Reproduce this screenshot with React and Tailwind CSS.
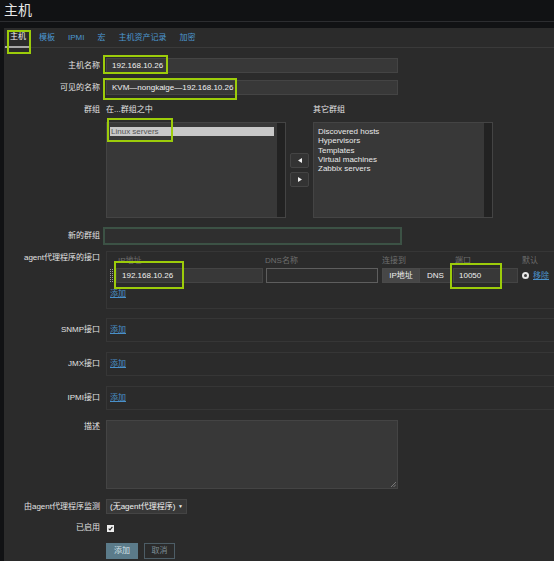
import React from "react";

// Zabbix "create host" form, dark theme, with green highlight annotations
const Label = ({ children, className = "" }) => (
  <div className={`w-[96px] shrink-0 text-right text-[#e2e2e2] ${className}`}>{children}</div>
);

const Field = ({ value = "", className = "" }) => (
  <div className={`h-[15px] border border-[#444] bg-[#383838] pl-[5px] leading-[13px] text-[#f0f0f0] ${className}`}>
    {value}
  </div>
);

const AddLink = () => <span className="text-[#4a90c8] underline">添加</span>;

function ListBox({ children }) {
  return (
    <div className="flex h-[96px] w-[180px] border border-[#444] bg-[#383838]">
      <div className="flex-1 px-[3px] pt-[4px] leading-[9.3px]">{children}</div>
      <div className="w-[8px] bg-[#222]" />
    </div>
  );
}

function Arrow({ dir }) {
  return (
    <div className="flex h-[15px] w-[19px] items-center justify-center rounded-[2px] border border-[#444] bg-[#333]">
      <svg width="4" height="5" viewBox="0 0 4 5">
        {dir === "left" ? <path d="M4 0 L0 2.5 L4 5 Z" fill="#eee" /> : <path d="M0 0 L4 2.5 L0 5 Z" fill="#eee" />}
      </svg>
    </div>
  );
}

const Mark = ({ className }) => <div className={`absolute border-2 border-[#9ccc0a] ${className}`} />;

export default function App() {
  return (
    <div className="relative flex h-[561px] w-[554px] flex-col overflow-hidden bg-[#111214] font-['Liberation_Sans','Noto_Sans_CJK_SC',sans-serif] text-[8px]">
      {/* page title */}
      <div className="h-[21px] px-[4px] text-[14px] leading-[20px] text-[#e8e8e8]">主机</div>
      <div className="h-[7px] border-t border-[#2c2d30]" />

      <div className="ml-[4px] flex-1 bg-[#2b2b2b]">
        {/* tabs */}
        <div className="flex h-[20px] gap-[3px] border-b border-[#3a3a3a] pl-[1px]">
          <div className="flex h-[20px] items-center border-b-2 border-[#a8a8a8] px-[5px] text-[#f0f0f0]">主机</div>
          {["模板", "IPMI", "宏", "主机资产记录", "加密"].map((t) => (
            <div key={t} className="flex h-[20px] items-center px-[5px] text-[#4b98d2]">
              {t}
            </div>
          ))}
        </div>

        <div className="flex flex-col pt-[10px]">
          <div className="flex h-[15px] items-center">
            <Label>主机名称</Label>
            <Field value="192.168.10.26" className="ml-[6px] w-[292px]" />
          </div>

          <div className="mt-[7px] flex h-[15px] items-center">
            <Label>可见的名称</Label>
            <Field value="KVM—nongkaige—192.168.10.26" className="ml-[6px] w-[292px]" />
          </div>

          {/* groups */}
          <div className="mt-[9px] flex">
            <Label className="leading-[12px]">群组</Label>
            <div className="ml-[6px] flex items-center">
              <div>
                <div className="leading-[12px] text-[#e2e2e2]">在...群组之中</div>
                <div className="mt-[6px]">
                  <ListBox>
                    <div className="bg-[#c8c8c8] pl-[1px] text-[#555]">Linux servers</div>
                  </ListBox>
                </div>
              </div>
              <div className="mx-[4px] mt-[18px] flex flex-col gap-[4px]">
                <Arrow dir="left" />
                <Arrow dir="right" />
              </div>
              <div>
                <div className="leading-[12px] text-[#e2e2e2]">其它群组</div>
                <div className="mt-[6px]">
                  <ListBox>
                    <div className="pl-[1px] text-[#e8e8e8]">
                      <div>Discovered hosts</div>
                      <div>Hypervisors</div>
                      <div>Templates</div>
                      <div>Virtual machines</div>
                      <div>Zabbix servers</div>
                    </div>
                  </ListBox>
                </div>
              </div>
            </div>
          </div>

          <div className="mt-[9px] flex h-[18px] items-center">
            <Label>新的群组</Label>
            <div className="ml-[3px] h-[18px] w-[299px] border-2 border-[#3c5245] bg-[#2f2f2f]" />
          </div>

          {/* agent interfaces */}
          <div className="mt-[6px] flex">
            <Label className="pt-[2px] leading-[10px]">agent代理程序的接口</Label>
            <div className="ml-[6px] h-[58px] w-[452px] shrink-0 border border-[#363636] pl-[3px] pt-[3px]">
              <div className="flex h-[11px] leading-[11px] text-[#6e6e6e]">
                <div className="w-[6px]" />
                <div className="w-[147px] pl-[2px]">IP地址</div>
                <div className="ml-[2px] w-[113px]">DNS名称</div>
                <div className="ml-[4px] w-[70px]">连接到</div>
                <div className="ml-[1px] w-[65px] pl-[2px]">端口</div>
                <div className="ml-[4px]">默认</div>
              </div>
              <div className="mt-[2px] flex h-[15px] items-center">
                <svg width="6" height="13" viewBox="0 0 6 13" className="shrink-0">
                  {[0, 2, 4, 6, 8, 10, 12].map((y) => (
                    <g key={y}>
                      <rect x="0" y={y} width="1" height="1" fill="#9a9a9a" />
                      <rect x="2" y={y} width="1" height="1" fill="#9a9a9a" />
                    </g>
                  ))}
                </svg>
                <Field value="192.168.10.26" className="w-[147px]" />
                <div className="ml-[3px] h-[15px] w-[112px] border border-[#5e5e5e] bg-[#2e2e2e]" />
                <div className="ml-[4px] flex h-[15px] w-[70px]">
                  <div className="flex w-[38px] items-center justify-center border border-[#4a4a4a] bg-[#474747] text-[#f0f0f0]">IP地址</div>
                  <div className="flex flex-1 items-center justify-center border border-l-0 border-[#444] bg-[#383838] text-[#f0f0f0]">DNS</div>
                </div>
                <Field value="10050" className="ml-[1px] w-[65px]" />
                <div className="ml-[4px] flex h-[7px] w-[7px] items-center justify-center rounded-full bg-[#e6e6e6]">
                  <div className="h-[3px] w-[3px] rounded-full bg-[#3a3a3a]" />
                </div>
                <span className="ml-[4px] text-[#4a90c8] underline">移除</span>
              </div>
              <div className="mt-[5px] leading-[12px]">
                <AddLink />
              </div>
            </div>
          </div>

          {["SNMP接口", "JMX接口", "IPMI接口"].map((name, i) => (
            <div key={name} className={`flex h-[24px] items-center ${i === 0 ? "mt-[9px]" : "mt-[10px]"}`}>
              <Label>{name}</Label>
              <div className="ml-[6px] flex h-[24px] w-[452px] shrink-0 items-center border border-[#363636] pl-[3px]">
                <AddLink />
              </div>
            </div>
          ))}

          {/* description */}
          <div className="mt-[10px] flex">
            <Label className="pt-[2px] leading-[10px]">描述</Label>
            <div className="relative ml-[6px] h-[69px] w-[292px] border border-[#444] bg-[#383838]">
              <svg width="5" height="5" viewBox="0 0 5 5" className="absolute bottom-[1px] right-[1px]">
                <path d="M5 0 L0 5 M5 2.5 L2.5 5" stroke="#8a8a8a" strokeWidth="0.8" />
              </svg>
            </div>
          </div>

          <div className="mt-[10px] flex h-[15px] items-center">
            <Label>由agent代理程序监测</Label>
            <div className="ml-[6px] flex h-[15px] w-[81px] items-center justify-between border border-[#444] bg-[#383838] pl-[3px] pr-[3px] text-[#f0f0f0]">
              <span>(无agent代理程序)</span>
              <span className="text-[5px]">▼</span>
            </div>
          </div>

          <div className="mt-[10px] flex h-[8px] items-center">
            <Label>已启用</Label>
            <div className="ml-[7px] flex h-[7px] w-[7px] items-center justify-center bg-[#eee]">
              <svg width="5" height="5" viewBox="0 0 5 5">
                <path d="M0.7 2.6 L2 3.9 L4.4 0.9" stroke="#222" strokeWidth="1.1" fill="none" />
              </svg>
            </div>
          </div>

          <div className="mt-[11px] flex">
            <div className="w-[96px]" />
            <div className="ml-[6px] flex h-[16px] w-[32px] items-center justify-center bg-[#5b7b8a] text-[#d5e0e6]">添加</div>
            <div className="ml-[6px] flex h-[16px] w-[31px] items-center justify-center border border-[#4d5d66] text-[#7d8c94]">取消</div>
          </div>
        </div>
      </div>

      {/* annotation highlights */}
      <Mark className="left-[7px] top-[30px] h-[24px] w-[24px]" />
      <Mark className="left-[103px] top-[55px] h-[19px] w-[65px]" />
      <Mark className="left-[103px] top-[78px] h-[22px] w-[134px]" />
      <Mark className="left-[107px] top-[118px] h-[24px] w-[66px]" />
      <Mark className="left-[114px] top-[261px] h-[28px] w-[70px]" />
      <Mark className="left-[450px] top-[263px] h-[26px] w-[52px]" />
    </div>
  );
}
